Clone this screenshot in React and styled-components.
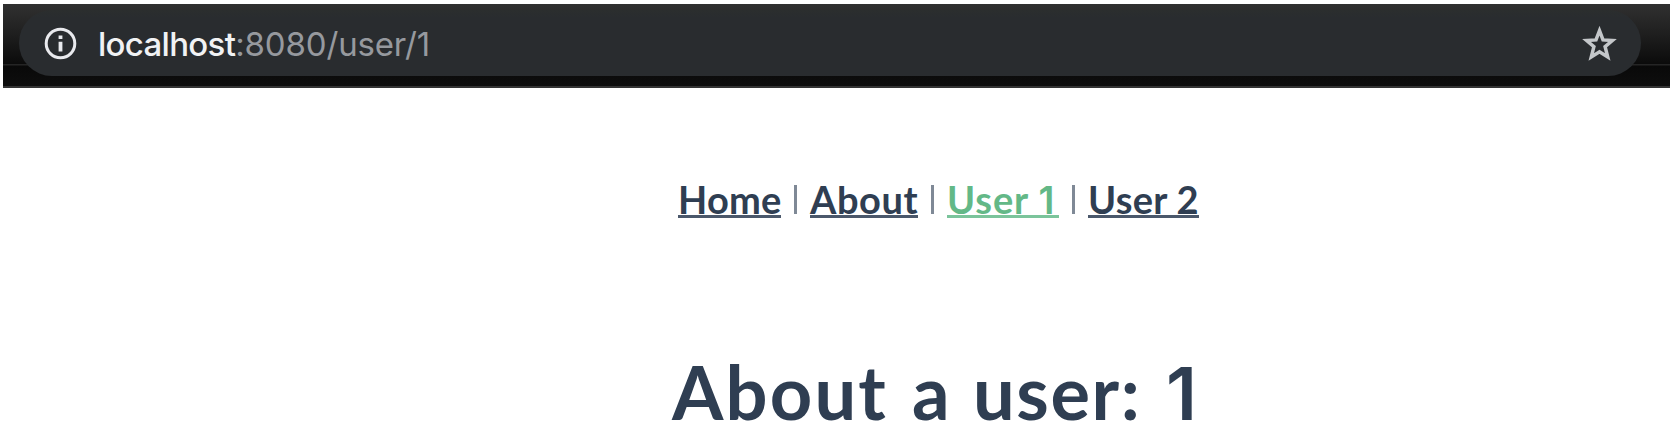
import React from "react";
import styled, { createGlobalStyle } from "styled-components";

const GlobalStyle = createGlobalStyle`
  * { box-sizing: border-box; }
  body { margin: 0; background: #fff; overflow: hidden; }
`;

const Page = styled.div`
  display: flex;
  flex-direction: column;
  height: 442px;
  padding: 4px 0 0 3px;
`;

const Toolbar = styled.header`
  height: 84px;
  flex: none;
  padding: 6px 29px 0 16px;
  border-bottom: 2px solid #343434;
  background: linear-gradient(#303030 0, #252525 20px, #131313 48px, #0b0b0b 60px, #252525 60px, #252525 61px, #090909 62px, #0e0e0e 82px);
`;

const AddressBar = styled.div`
  display: flex;
  align-items: center;
  height: 66px;
  padding: 1px 24px 0 25px;
  border-radius: 33px;
  background: linear-gradient(#2b2e2e, #292c2f 8px);
`;

const Icon = styled.svg`
  flex: none;
  display: block;
  color: ${(p) => p.$color};
`;

const Address = styled.div`
  flex: 1;
  margin-left: 21px;
  white-space: nowrap;
  color: #96999e;
  font: 400 33px/40px Inter, sans-serif;
  letter-spacing: -0.15px;
`;

const Host = styled.span`
  color: #f1f2f4;
  font-weight: 500;
  letter-spacing: -0.7px;
`;

const Content = styled.main`
  display: flex;
  flex-direction: column;
  align-items: flex-start;
  color: #2f3e52;
  font-family: Lato, sans-serif;
`;

const Nav = styled.nav`
  display: flex;
  height: 44px;
  margin: 90px 0 0 675px;
`;

const NavLink = styled.a`
  height: 40px;
  width: ${(p) => p.$width}px;
  border-bottom: 3px solid ${(p) => (p.$active ? "#7bc49b" : "#4b586b")};
  color: ${(p) => (p.$active ? "#63b887" : "#2f3e52")};
  font-size: 38px;
  line-height: 43px;
  font-weight: 700;
  white-space: nowrap;
  letter-spacing: ${(p) => p.$tracking || 0}px;
`;

const Divider = styled.span`
  width: 3px;
  height: 29px;
  margin: 7px 13px 0;
  background: #7f8996;
`;

const Title = styled.h1`
  display: flex;
  margin: 125px 0 0 669px;
  font-size: 74px;
  line-height: 90px;
  font-weight: 700;
  white-space: nowrap;
`;

const Word = styled.span`
  width: ${(p) => p.$width}px;
  letter-spacing: ${(p) => p.$tracking || 0}px;
  white-space: pre;
`;

const PlainOne = styled.span`
  font-family: Inter, sans-serif;
  font-weight: 600;
  font-size: 0.99em;
  line-height: 1;
  letter-spacing: 0;
`;

export default function App() {
  return (
    <Page>
      <GlobalStyle />
      <Toolbar>
        <AddressBar>
          <Icon $color="#e9eaee" width="33" height="33" viewBox="0 0 33 33" fill="none" stroke="currentColor">
            <circle cx="16.5" cy="16.5" r="14.3" strokeWidth="3" />
            <path d="M16.5 8.5v3.6M16.5 14.7v9.8" strokeWidth="3.8" />
          </Icon>
          <Address>
            <Host>localhost</Host>:8080/user/1
          </Address>
          <Icon $color="#c4c7ca" width="35" height="35" viewBox="0 0 35 35" fill="none" stroke="currentColor">
            <path d="M17.5 4.7l3.5 9.2 9.4.6-7.3 6.2 2.6 10.2-8.2-5.2-8.2 5.2 2.6-10.2-7.3-6.2 9.4-.6z" strokeWidth="3.5" />
          </Icon>
        </AddressBar>
      </Toolbar>
      <Content>
        <Nav>
          <NavLink $width={103} $tracking={0.2}>Home</NavLink>
          <Divider />
          <NavLink $width={108} $tracking={0.6}>About</NavLink>
          <Divider />
          <NavLink $active $width={112} $tracking={0.9}>User <PlainOne>1</PlainOne></NavLink>
          <Divider />
          <NavLink $width={111} $tracking={0.3}>User 2</NavLink>
        </Nav>
        <Title>
          <Word $width={240} $tracking={2.2}>About </Word>
          <Word $width={61}>a </Word>
          <Word $width={193} $tracking={1.6}>user: </Word>
          <Word $width={40}><PlainOne>1</PlainOne></Word>
        </Title>
      </Content>
    </Page>
  );
}
